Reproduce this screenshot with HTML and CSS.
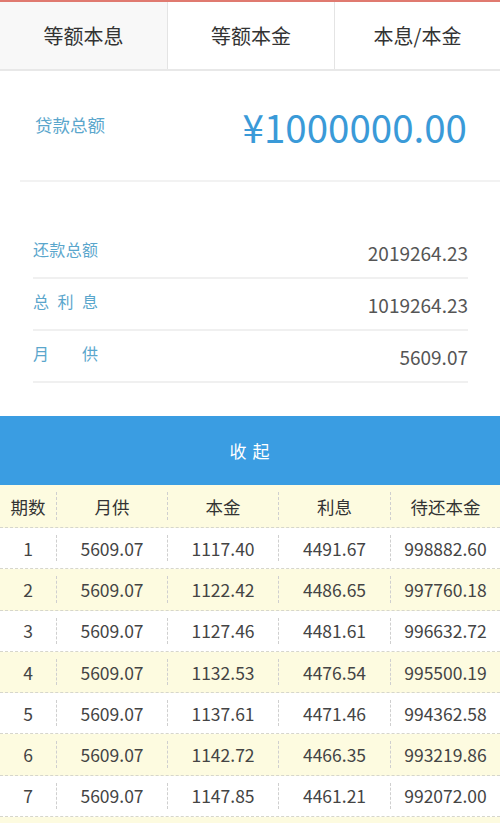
FILE: index.html
```html
<!DOCTYPE html>
<html lang="zh-CN">
<head>
<meta charset="utf-8">
<title>房贷计算</title>
<link rel="stylesheet" href="styles.css">
</head>
<body>
<div class="page">
  <nav class="tabs">
    <div class="tab active">等额本息</div>
    <div class="tab">等额本金</div>
    <div class="tab">本息/本金</div>
  </nav>

  <section class="loan">
    <span class="loan-label">贷款总额</span>
    <span class="loan-amount">¥1000000.00</span>
  </section>

  <section class="summary">
    <div class="sum-row">
      <span class="sum-label">还款总额</span>
      <span class="sum-value">2019264.23</span>
    </div>
    <div class="sum-row">
      <span class="sum-label">总利息</span>
      <span class="sum-value">1019264.23</span>
    </div>
    <div class="sum-row">
      <span class="sum-label">月供</span>
      <span class="sum-value">5609.07</span>
    </div>
  </section>

  <div class="collapse-bar">收 起</div>

  <div class="table">
    <div class="row head">
      <div class="cell"><span>期数</span></div>
      <div class="cell"><span>月供</span></div>
      <div class="cell"><span>本金</span></div>
      <div class="cell"><span>利息</span></div>
      <div class="cell"><span>待还本金</span></div>
    </div>
    <div class="row">
      <div class="cell"><span>1</span></div>
      <div class="cell"><span>5609.07</span></div>
      <div class="cell"><span>1117.40</span></div>
      <div class="cell"><span>4491.67</span></div>
      <div class="cell"><span>998882.60</span></div>
    </div>
    <div class="row alt">
      <div class="cell"><span>2</span></div>
      <div class="cell"><span>5609.07</span></div>
      <div class="cell"><span>1122.42</span></div>
      <div class="cell"><span>4486.65</span></div>
      <div class="cell"><span>997760.18</span></div>
    </div>
    <div class="row">
      <div class="cell"><span>3</span></div>
      <div class="cell"><span>5609.07</span></div>
      <div class="cell"><span>1127.46</span></div>
      <div class="cell"><span>4481.61</span></div>
      <div class="cell"><span>996632.72</span></div>
    </div>
    <div class="row alt">
      <div class="cell"><span>4</span></div>
      <div class="cell"><span>5609.07</span></div>
      <div class="cell"><span>1132.53</span></div>
      <div class="cell"><span>4476.54</span></div>
      <div class="cell"><span>995500.19</span></div>
    </div>
    <div class="row">
      <div class="cell"><span>5</span></div>
      <div class="cell"><span>5609.07</span></div>
      <div class="cell"><span>1137.61</span></div>
      <div class="cell"><span>4471.46</span></div>
      <div class="cell"><span>994362.58</span></div>
    </div>
    <div class="row alt">
      <div class="cell"><span>6</span></div>
      <div class="cell"><span>5609.07</span></div>
      <div class="cell"><span>1142.72</span></div>
      <div class="cell"><span>4466.35</span></div>
      <div class="cell"><span>993219.86</span></div>
    </div>
    <div class="row">
      <div class="cell"><span>7</span></div>
      <div class="cell"><span>5609.07</span></div>
      <div class="cell"><span>1147.85</span></div>
      <div class="cell"><span>4461.21</span></div>
      <div class="cell"><span>992072.00</span></div>
    </div>
    <div class="row alt">
      <div class="cell"><span></span></div>
      <div class="cell"><span></span></div>
      <div class="cell"><span></span></div>
      <div class="cell"><span></span></div>
      <div class="cell"><span></span></div>
    </div>
  </div>
</div>
</body>
</html>
```

FILE: styles.css
```css
html, body {
  margin: 0;
  padding: 0;
  background: #ffffff;
}

body {
  font-family: "Noto Sans CJK SC", "Noto Sans", sans-serif;
  color: #333333;
  width: 500px;
  height: 823px;
  overflow: hidden;
}

.page {
  width: 500px;
}

/* tabs */
.tabs {
  display: grid;
  grid-template-columns: 167px 167px 166px;
  height: 67px;
  border-top: 2px solid #e07a70;
  border-bottom: 2px solid #e8e8e8;
}

.tab {
  display: flex;
  align-items: center;
  justify-content: center;
  font-size: 20px;
  color: #333333;
  background: #ffffff;
  border-left: 1px solid #e4e4e4;
  padding-bottom: 1px;
}

.tab:first-child {
  border-left: none;
}

.tab.active {
  background: #f8f8f8;
}

/* loan amount */
.loan {
  display: flex;
  align-items: center;
  justify-content: space-between;
  height: 109px;
  margin-left: 20px;
  padding: 0 33px 0 15px;
  border-bottom: 2px solid #f2f2f2;
}

.loan-label {
  font-size: 17.5px;
  color: #5aa6cc;
  padding-bottom: 2px;
}

.loan-amount {
  font-size: 38.5px;
  color: #3a9ad8;
}

/* summary rows */
.summary {
  padding: 45px 32px 0 33px;
}

.sum-row {
  display: flex;
  align-items: center;
  justify-content: space-between;
  height: 50px;
  border-bottom: 2px solid #f0f0f0;
}

.sum-label {
  width: 65px;
  font-size: 16px;
  color: #5aa6cc;
  text-align: justify;
  text-align-last: justify;
  padding-bottom: 6px;
}

.sum-value {
  font-size: 19px;
  color: #555555;
}

/* collapse bar */
.collapse-bar {
  margin-top: 33px;
  height: 69px;
  display: flex;
  align-items: center;
  justify-content: center;
  background: #3a9de2;
  color: #ffffff;
  font-size: 17px;
  letter-spacing: 1px;
  padding-bottom: 1px;
  box-sizing: border-box;
}

/* table */
.table {
  width: 500px;
}

.row {
  display: grid;
  grid-template-columns: 56px 111px 111px 112px 110px;
  height: 41.3px;
  box-sizing: border-box;
  border-bottom: 1px dashed #d6d6cc;
  background: #ffffff;
}

.row.alt,
.row.head {
  background: #fdfbe0;
}

.row.head {
  height: 43px;
}

.cell {
  display: flex;
  align-items: stretch;
  padding: 7px 0;
}

.cell span {
  flex: 1;
  display: flex;
  align-items: center;
  justify-content: center;
  border-left: 1px dashed #cfcfcf;
  font-size: 17.5px;
  color: #444444;
}

.cell:first-child span {
  border-left: none;
}

.row.head .cell span {
  color: #333333;
}
```
